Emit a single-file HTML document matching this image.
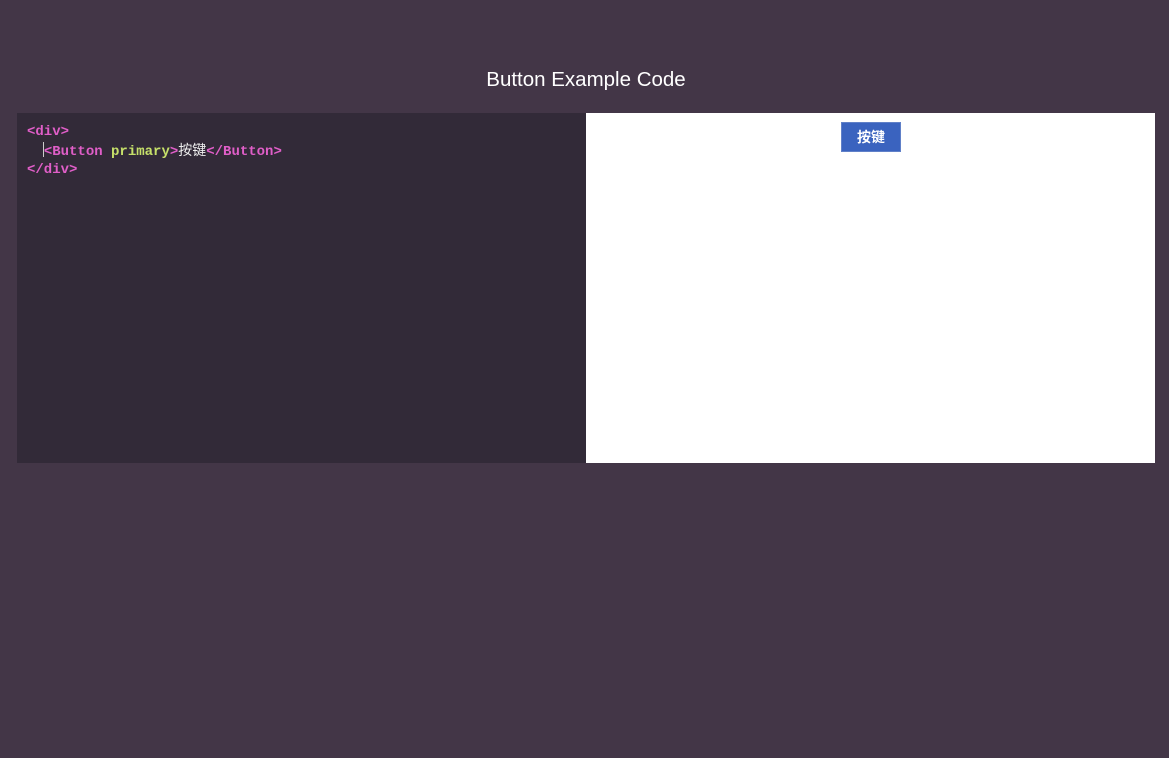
<!DOCTYPE html>
<html><head><meta charset="utf-8"><style>
body{margin:0;width:1169px;height:758px;background:#433647;font-family:"Liberation Sans","Noto Sans CJK SC",sans-serif;overflow:hidden;position:relative}
h1{position:absolute;top:68px;left:0;width:1172px;text-align:center;margin:0;font-size:20.5px;font-weight:normal;color:#fff;line-height:24px}
.ed{position:absolute;left:17px;top:113px;width:569px;height:350px;background:#322a38}
.pv{position:absolute;left:586px;top:113px;width:569px;height:350px;background:#fff}
pre{margin:0;position:absolute;left:10px;top:10px;font-family:"Liberation Mono","Noto Sans CJK SC",monospace;font-size:14px;line-height:18.5px;color:#e8e0ea;font-weight:bold}
.t{color:#e05ec8}.a{color:#c6e06a}.w{color:#eee;font-weight:normal}
.cur{display:inline-block;width:1px;height:15px;background:#ccc;vertical-align:-2px;margin-left:-1px}
.btn{position:absolute;left:255px;top:9px;width:60px;height:30px;background:#3a63bf;border:1px solid #6080c8;box-sizing:border-box;color:#fff;font-size:14px;font-weight:bold;text-align:center;line-height:28px}
</style></head><body>
<h1>Button Example Code</h1>
<div class="ed"><pre><span class="t">&lt;div&gt;</span>
  <span class="cur"></span><span class="t">&lt;Button</span> <span class="a">primary</span><span class="t">&gt;</span><span class="w">按键</span><span class="t">&lt;/Button&gt;</span>
<span class="t">&lt;/div&gt;</span></pre></div>
<div class="pv"><div class="btn">按键</div></div>
</body></html>
